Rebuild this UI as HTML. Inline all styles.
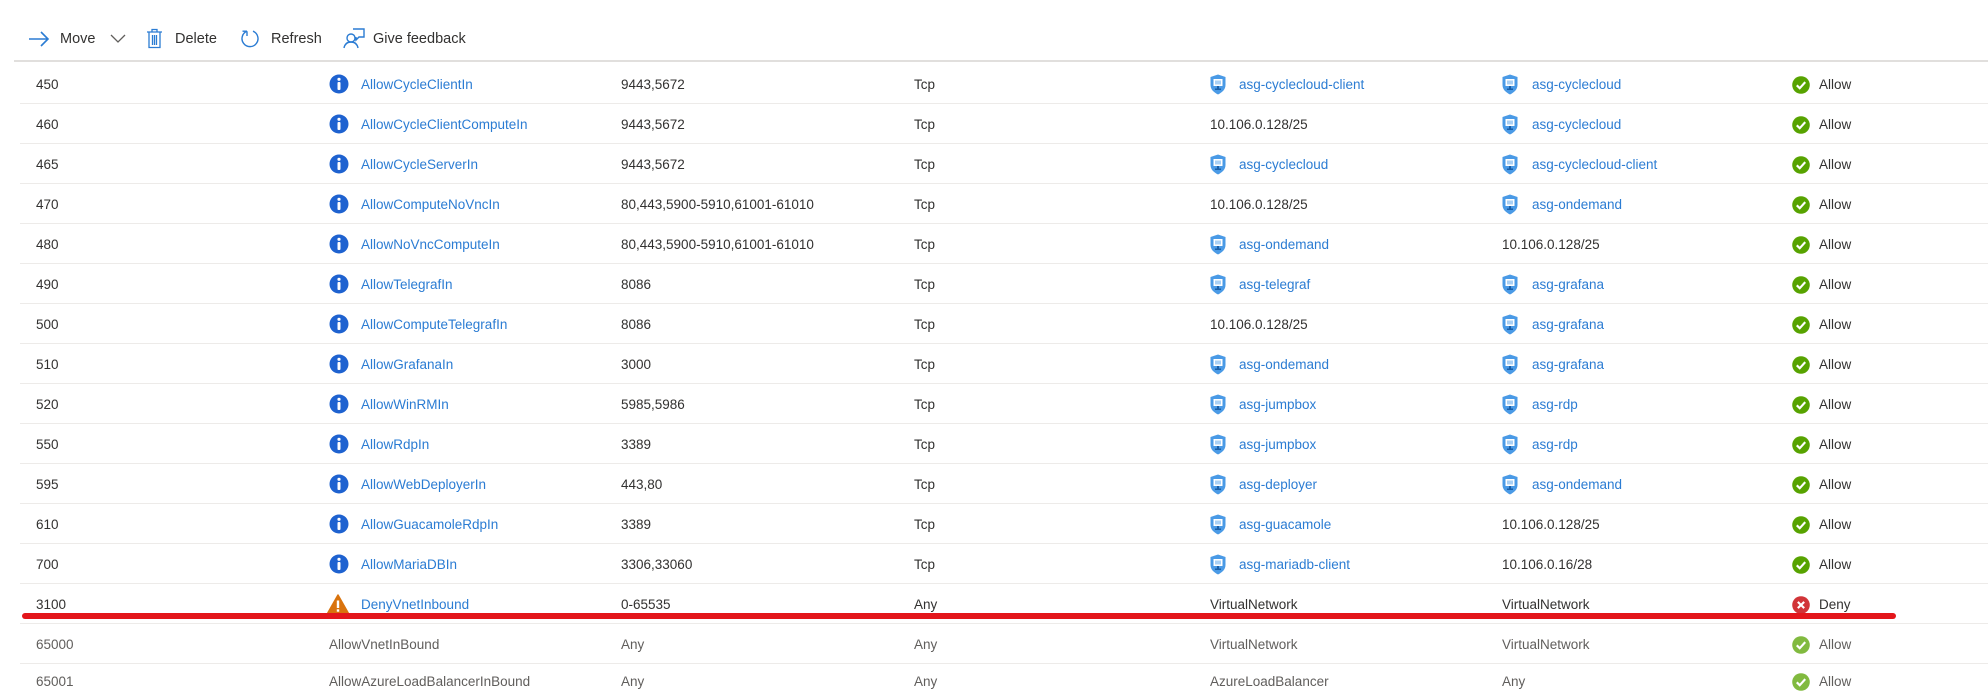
<!DOCTYPE html>
<html><head><meta charset="utf-8"><style>
*{margin:0;padding:0;box-sizing:border-box}
body{width:1988px;height:685px;overflow:hidden;background:#fff;font-family:"Liberation Sans",sans-serif;font-size:13.5px;color:#323130;position:relative}
.a{position:absolute;white-space:nowrap;line-height:18px}
.tb{position:absolute;top:30px;font-size:14.5px;color:#323130;line-height:18px}
.row{position:absolute;left:20px;right:0;height:40px;border-bottom:1px solid #edebe9}
.l{color:#2b7cd3}
.g{color:#605e5c}
</style></head><body>
<svg class="a" style="left:28px;top:31px" width="22" height="16" viewBox="0 0 22 16"><path d="M1 8H20M13 1L20 8L13 15" stroke="#2b7cd3" stroke-width="1.6" fill="none"/></svg>
<div class="tb" style="left:60px">Move</div>
<svg class="a" style="left:110px;top:34px" width="16" height="10"><path d="M1 1L8 8L15 1" stroke="#605e5c" stroke-width="1.3" fill="none"/></svg>
<svg class="a" style="left:146px;top:28px" width="17" height="21" viewBox="0 0 17 21"><path d="M1 4H16M6 4V1.5H11V4M3 4V19.5H14V4M6.5 7V17M8.5 7V17M10.5 7V17" stroke="#2b7cd3" stroke-width="1.3" fill="none"/></svg>
<div class="tb" style="left:175px">Delete</div>
<svg class="a" style="left:240px;top:28px" width="20" height="21" viewBox="0 0 20 21"><path d="M7 3.2A8 8 0 1 0 13 3.2M7 3.2V8M7 3.2H2.5" stroke="#2b7cd3" stroke-width="1.4" fill="none"/></svg>
<div class="tb" style="left:271px">Refresh</div>
<svg class="a" style="left:343px;top:27px" width="22" height="22" viewBox="0 0 22 22"><circle cx="8" cy="11" r="4" stroke="#2b7cd3" stroke-width="1.4" fill="none"/><path d="M1 21C2 16 5 15 8 15C11 15 14 16 15 21M10 2H21V10H16L13 13V10" stroke="#2b7cd3" stroke-width="1.4" fill="none"/></svg>
<div class="tb" style="left:373px">Give feedback</div>
<div class="a" style="left:14px;right:0;top:60px;height:2px;background:#e1dfdd"></div>
<div id="rows"></div>
<div class="a" style="left:22px;width:1874px;top:613px;height:6px;background:#e3161b;border-radius:3px"></div>
<script>
const info='<svg width="20" height="20" viewBox="0 0 20 20"><circle cx="10" cy="10" r="9.5" fill="#1e62d0"/><circle cx="10" cy="5.3" r="1.6" fill="#fff"/><rect x="8.5" y="8" width="3" height="8" rx="1" fill="#fff"/></svg>';
const warn='<svg width="22" height="20" viewBox="0 0 22 20"><path d="M11 1L21.5 19.5H0.5Z" fill="#d9730d" stroke="#d9730d" stroke-linejoin="round" stroke-width="1.5"/><rect x="9.8" y="6.5" width="2.4" height="7.5" fill="#fff"/><rect x="9.8" y="15.3" width="2.4" height="2.4" fill="#fff"/></svg>';
const shield='<svg width="16" height="21" viewBox="0 0 16 21"><path d="M8 0.5L15.5 3V11C15.5 15.5 12 18.5 8 20.5C4 18.5 0.5 15.5 0.5 11V3Z" fill="#4a9ae6"/><rect x="3.5" y="5" width="9" height="7" fill="#fff"/><rect x="5" y="6.5" width="6" height="4" fill="#a9d0f5"/><rect x="7" y="12" width="2" height="3" fill="#1a5fa8"/><rect x="5" y="14.5" width="6" height="1.5" fill="#1a5fa8"/></svg>';
const ok=(o)=>'<svg width="18" height="18" viewBox="0 0 17 17" style="opacity:'+o+'"><circle cx="8.5" cy="8.5" r="8.3" fill="#57a300"/><path d="M4.5 8.8L7.3 11.5L12.5 5.8" stroke="#fff" stroke-width="2" fill="none"/></svg>';
const deny='<svg width="18" height="18" viewBox="0 0 17 17"><circle cx="8.5" cy="8.5" r="8.3" fill="#d13438"/><path d="M5.5 5.5L11.5 11.5M11.5 5.5L5.5 11.5" stroke="#fff" stroke-width="2"/></svg>';
const D=[
["450","AllowCycleClientIn","9443,5672","Tcp","*asg-cyclecloud-client","*asg-cyclecloud"],
["460","AllowCycleClientComputeIn","9443,5672","Tcp","10.106.0.128/25","*asg-cyclecloud"],
["465","AllowCycleServerIn","9443,5672","Tcp","*asg-cyclecloud","*asg-cyclecloud-client"],
["470","AllowComputeNoVncIn","80,443,5900-5910,61001-61010","Tcp","10.106.0.128/25","*asg-ondemand"],
["480","AllowNoVncComputeIn","80,443,5900-5910,61001-61010","Tcp","*asg-ondemand","10.106.0.128/25"],
["490","AllowTelegrafIn","8086","Tcp","*asg-telegraf","*asg-grafana"],
["500","AllowComputeTelegrafIn","8086","Tcp","10.106.0.128/25","*asg-grafana"],
["510","AllowGrafanaIn","3000","Tcp","*asg-ondemand","*asg-grafana"],
["520","AllowWinRMIn","5985,5986","Tcp","*asg-jumpbox","*asg-rdp"],
["550","AllowRdpIn","3389","Tcp","*asg-jumpbox","*asg-rdp"],
["595","AllowWebDeployerIn","443,80","Tcp","*asg-deployer","*asg-ondemand"],
["610","AllowGuacamoleRdpIn","3389","Tcp","*asg-guacamole","10.106.0.128/25"],
["700","AllowMariaDBIn","3306,33060","Tcp","*asg-mariadb-client","10.106.0.16/28"],
["3100","DenyVnetInbound","0-65535","Any","VirtualNetwork","VirtualNetwork","deny"],
["65000","AllowVnetInBound","Any","Any","VirtualNetwork","VirtualNetwork","def"],
["65001","AllowAzureLoadBalancerInBound","Any","Any","AzureLoadBalancer","Any","def"]];
let h='';
D.forEach((r,i)=>{const top=64+40*i+(i==15?-3:0), ty=top+12, c=r[6]==='def'?'g':'';
if(i<15)h+=`<div class="row" style="top:${top}px"></div>`;
h+=`<div class="a ${c}" style="left:36px;top:${ty}px">${r[0]}</div>`;
if(r[6]==='def'){h+=`<div class="a g" style="left:329px;top:${ty}px">${r[1]}</div>`;}
else{h+=`<div class="a" style="left:${r[6]==='deny'?327:329}px;top:${top+10}px">${r[6]==='deny'?warn:info}</div><div class="a l" style="left:361px;top:${ty}px">${r[1]}</div>`;}
h+=`<div class="a ${c}" style="left:621px;top:${ty}px">${r[2]}</div><div class="a ${c}" style="left:914px;top:${ty}px">${r[3]}</div>`;
[[r[4],1210,1239],[r[5],1502,1532]].forEach(([v,ix,tx])=>{
if(v[0]==='*'){h+=`<div class="a" style="left:${ix}px;top:${top+10}px">${shield}</div><div class="a l" style="left:${tx}px;top:${ty}px">${v.slice(1)}</div>`;}
else h+=`<div class="a ${c}" style="left:${ix}px;top:${ty}px">${v}</div>`;});
h+=`<div class="a" style="left:1792px;top:${top+12}px">${r[6]==='deny'?deny:ok(r[6]==='def'?0.75:1)}</div><div class="a ${c}" style="left:1819px;top:${ty}px">${r[6]==='deny'?'Deny':'Allow'}</div>`;
});
document.getElementById('rows').innerHTML=h;
</script>
</body></html>
